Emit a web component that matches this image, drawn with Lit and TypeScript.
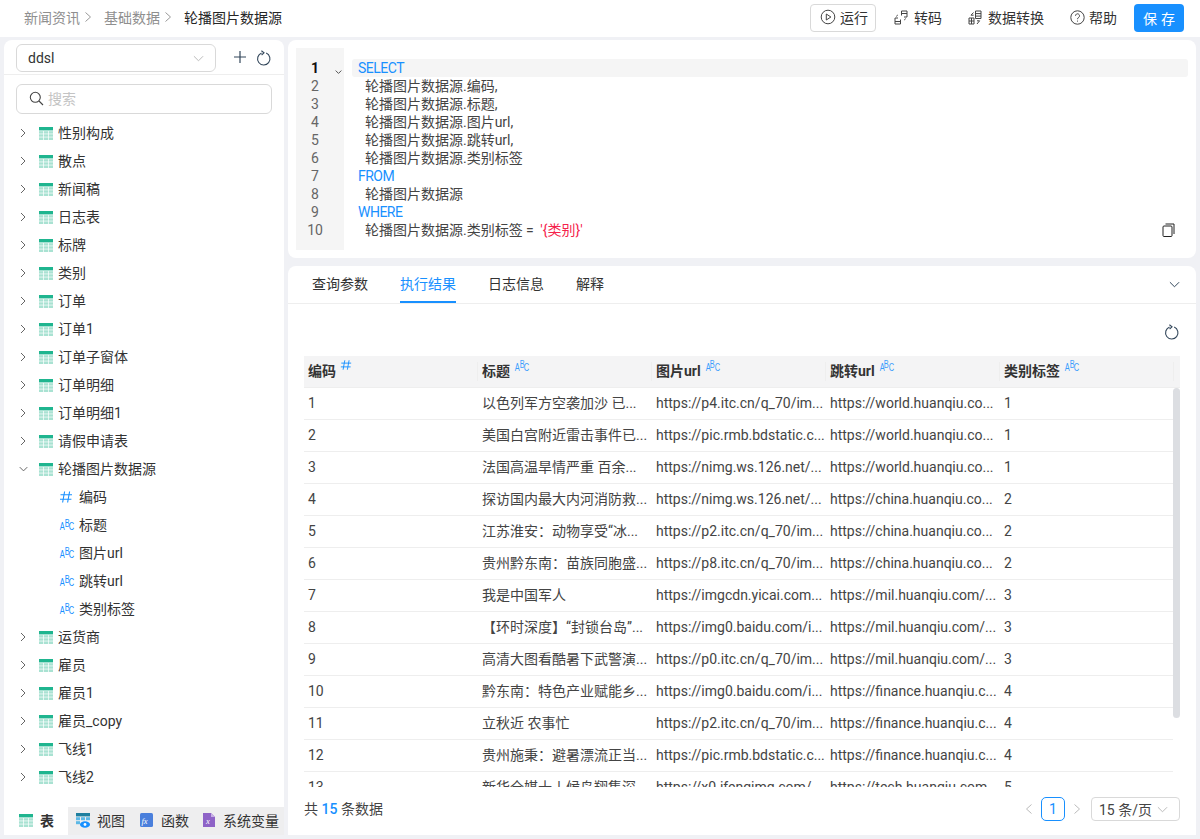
import { LitElement, html, css } from 'lit';
import { customElement } from 'lit/decorators.js';

const TABLES_TOP = ['性别构成', '散点', '新闻稿', '日志表', '标牌', '类别', '订单', '订单1', '订单子窗体', '订单明细', '订单明细1', '请假申请表'];
const TABLES_BOTTOM = ['运货商', '雇员', '雇员1', '雇员_copy', '飞线1', '飞线2'];
const FIELDS = [
  { name: '编码', num: true },
  { name: '标题' },
  { name: '图片url' },
  { name: '跳转url' },
  { name: '类别标签' },
];
const ROWS = [
  ['1', '以色列军方空袭加沙 已...', 'https://p4.itc.cn/q_70/im...', 'https://world.huanqiu.co...', '1'],
  ['2', '美国白宫附近雷击事件已...', 'https://pic.rmb.bdstatic.c...', 'https://world.huanqiu.co...', '1'],
  ['3', '法国高温旱情严重 百余...', 'https://nimg.ws.126.net/...', 'https://world.huanqiu.co...', '1'],
  ['4', '探访国内最大内河消防救...', 'https://nimg.ws.126.net/...', 'https://china.huanqiu.co...', '2'],
  ['5', '江苏淮安：动物享受“冰...', 'https://p2.itc.cn/q_70/im...', 'https://china.huanqiu.co...', '2'],
  ['6', '贵州黔东南：苗族同胞盛...', 'https://p8.itc.cn/q_70/im...', 'https://china.huanqiu.co...', '2'],
  ['7', '我是中国军人', 'https://imgcdn.yicai.com...', 'https://mil.huanqiu.com/...', '3'],
  ['8', '【环时深度】“封锁台岛”...', 'https://img0.baidu.com/i...', 'https://mil.huanqiu.com/...', '3'],
  ['9', '高清大图看酷暑下武警演...', 'https://p0.itc.cn/q_70/im...', 'https://mil.huanqiu.com/...', '3'],
  ['10', '黔东南：特色产业赋能乡...', 'https://img0.baidu.com/i...', 'https://finance.huanqiu.c...', '4'],
  ['11', '立秋近 农事忙', 'https://p2.itc.cn/q_70/im...', 'https://finance.huanqiu.c...', '4'],
  ['12', '贵州施秉：避暑漂流正当...', 'https://pic.rmb.bdstatic.c...', 'https://finance.huanqiu.c...', '4'],
  ['13', '新华全媒十丨候鸟翔集深...', 'https://x0.ifengimg.com/...', 'https://tech.huanqiu.com...', '5'],
];
const SQL = [
  [['kw', 'SELECT']],
  [['', '  轮播图片数据源.编码,']],
  [['', '  轮播图片数据源.标题,']],
  [['', '  轮播图片数据源.图片url,']],
  [['', '  轮播图片数据源.跳转url,']],
  [['', '  轮播图片数据源.类别标签']],
  [['kw', 'FROM']],
  [['', '  轮播图片数据源']],
  [['kw', 'WHERE']],
  [['', '  轮播图片数据源.类别标签 = '], ['str', "'{类别}'"]],
];

const chevronRight = html`<svg width="8" height="10" viewBox="0 0 8 10" fill="none" stroke="currentColor"><path d="M2 1l4 4-4 4"/></svg>`;
const chevronLarge = html`<svg width="8" height="12" viewBox="0 0 8 12" fill="none" stroke="currentColor"><path d="M1.5 1.5L6.5 6l-5 4.5"/></svg>`;
const chevronLeft = html`<svg width="8" height="12" viewBox="0 0 8 12" fill="none" stroke="currentColor"><path d="M6.5 1.5L1.5 6l5 4.5"/></svg>`;
const chevronDown = (w = 12, h = 7) => html`<svg width=${w} height=${h} viewBox="0 0 12 7" fill="none" stroke="currentColor"><path vector-effect="non-scaling-stroke" d="M1 1l5 5 5-5"/></svg>`;
const refresh = html`<svg width="16" height="16" viewBox="0 0 16 16" fill="none" stroke="#33475b" stroke-width="1.1"><path d="M10.2 3.1A6.2 6.2 0 1 1 5.6 3"/><path d="M5.4 0.8L8 2.8 5.6 5"/></svg>`;
const tableIcon = html`<svg width="14" height="13" viewBox="0 0 14 13"><rect width="14" height="3.4" fill="#1fb58f"/><g fill="#a9e2d2"><rect y="4.2" width="4.2" height="2.4"/><rect x="4.9" y="4.2" width="4.2" height="2.4"/><rect x="9.8" y="4.2" width="4.2" height="2.4"/><rect y="7.3" width="4.2" height="2.4"/><rect x="4.9" y="7.3" width="4.2" height="2.4"/><rect x="9.8" y="7.3" width="4.2" height="2.4"/><rect y="10.4" width="4.2" height="2.6"/><rect x="4.9" y="10.4" width="4.2" height="2.6"/><rect x="9.8" y="10.4" width="4.2" height="2.6"/></g></svg>`;
const hashIcon = (s = 14) => html`<svg width=${s} height=${s} viewBox="0 0 14 14" fill="none" stroke="#1890ff" stroke-width="1.1"><path d="M5.6 1.5L3.6 12.5M10.6 1.5L8.6 12.5M1.5 4.8H13M1 9.2H12.4"/></svg>`;
const abcIcon = html`<span class="abc"><i>A</i><i class="up">B</i><i>C</i></span>`;

@customElement('app-root')
export class AppRoot extends LitElement {
  static styles = css`
    :host {
      display: block;
      height: 839px;
      overflow: hidden;
      background: #f0f1f5;
      font-family: Roboto, "Noto Sans CJK SC", sans-serif;
      font-size: 14px;
      color: #333;
    }
    svg { display: block; flex: none; }
    .abc {
      display: inline-flex;
      flex: none;
      width: 14px;
      height: 12px;
      color: #1890ff;
      font-family: "Liberation Sans", sans-serif;
      font-size: 11px;
      line-height: 12px;
    }
    .abc i {
      display: block;
      width: 4.67px;
      font-style: normal;
      text-align: center;
      transform: translateY(1px) scaleX(0.68);
    }
    .abc i.up { transform: translateY(-2px) scaleX(0.68); }
    .topbar {
      height: 37px;
      box-sizing: border-box;
      background: #fff;
      display: flex;
      align-items: center;
      justify-content: space-between;
      padding: 0 16px 1px 24px;
    }
    .crumbs { display: flex; align-items: center; color: #8f8f8f; padding-bottom: 2px; }
    .crumbs svg { margin: 0 12px 0 4px; color: #999; }
    .crumbs b { font-weight: 400; color: #262626; }
    .actions { display: flex; align-items: center; }
    .act { display: flex; align-items: center; gap: 6px; margin-right: 26px; color: #333; white-space: nowrap; padding-bottom: 2px; }
    .act.run {
      height: 28px;
      box-sizing: border-box;
      padding: 0 7px 2px 9px;
      border: 1px solid #d9d9d9;
      border-radius: 4px;
      margin-right: 18px;
      gap: 4px;
    }
    .act.help { gap: 4px; margin-right: 17px; }
    .save {
      width: 50px;
      height: 28px;
      border-radius: 4px;
      background: #1890ff;
      color: #fff;
      display: flex;
      align-items: center;
      justify-content: center;
      letter-spacing: 4px;
      padding: 0 0 1px 4px;
      box-sizing: border-box;
    }
    .main { display: flex; gap: 4px; padding: 3px 4px 4px; height: 802px; box-sizing: border-box; }
    .side {
      width: 280px;
      flex: none;
      background: #fff;
      border-radius: 8px 8px 0 0;
      display: flex;
      flex-direction: column;
      overflow: hidden;
    }
    .side-top {
      height: 35px;
      box-sizing: border-box;
      display: flex;
      align-items: flex-start;
      padding: 4px 12px 0;
      border-bottom: 1px solid #eee;
      flex: none;
    }
    .select {
      width: 200px;
      height: 28px;
      box-sizing: border-box;
      border: 1px solid #d9d9d9;
      border-radius: 6px;
      display: flex;
      align-items: center;
      justify-content: space-between;
      padding: 0 11px;
      color: #333;
    }
    .select svg { color: #bbb; }
    .side-top .plus { margin: 6px 0 0 17px; }
    .side-top .re { margin: 6px 0 0 9px; }
    .search {
      margin: 9px 12px 5px;
      height: 30px;
      box-sizing: border-box;
      border: 1px solid #d9d9d9;
      border-radius: 6px;
      display: flex;
      align-items: center;
      gap: 4px;
      padding: 0 12px 2px;
      color: #c4c4c4;
      flex: none;
    }
    .tree { flex: 1; min-height: 0; overflow: hidden; }
    .node { height: 28px; display: flex; align-items: center; color: #333; }
    .node .arrow { width: 8px; margin-left: 15px; margin-right: 12px; color: #666; display: flex; justify-content: center; }
    .node .label { margin: -2px 0 0 5px; }
    .field { padding-left: 55px; }
    .field .glyph { width: 14px; margin-right: 6px; display: flex; justify-content: center; align-items: center; }
    .field .name { margin-top: -2px; }
    .tabs { height: 28px; flex: none; display: flex; background: #eeeeef; }
    .tab { display: flex; align-items: center; gap: 7px; padding: 0 0 2px 8px; margin-right: 15px; color: #333; white-space: nowrap; flex: none; }
    .tab.wide { gap: 8px; padding-left: 0; margin-right: 14px; }
    .tab.on { background: #fff; width: 64px; box-sizing: border-box; padding-left: 15px; margin-right: 0; font-weight: 700; }
    .content { flex: 1; min-width: 0; display: flex; flex-direction: column; gap: 8px; }
    .card { background: #fff; border-radius: 8px; }
    .editor { height: 218px; flex: none; box-sizing: border-box; padding: 8px; display: flex; position: relative; }
    .gutter {
      width: 48px;
      height: 202px;
      background: #f5f5f5;
      box-sizing: border-box;
      padding-top: 11px;
      flex: none;
      position: relative;
    }
    .ln { height: 18px; line-height: 18px; width: 38px; text-align: center; color: #666; }
    .ln.cur { color: #111; font-weight: 700; }
    .fold { position: absolute; left: 39px; top: 22px; color: #555; }
    .code { flex: 1; margin-left: 8px; padding-top: 11px; }
    .line { height: 18px; line-height: 18px; white-space: pre; padding-left: 6px; color: #444; border-radius: 3px; }
    .line.cur { background: #f5f5f5; }
    .kw { color: #1890ff; letter-spacing: -0.5px; }
    .str { color: #f5224b; margin-left: 3px; }
    .copy { position: absolute; right: 21px; bottom: 21px; }
    .result { flex: 1; min-height: 0; display: flex; flex-direction: column; border-radius: 8px 8px 0 0; }
    .rtabs {
      height: 38px;
      box-sizing: border-box;
      flex: none;
      display: flex;
      gap: 32px;
      padding: 0 16px 0 24px;
      border-bottom: 1px solid #eee;
      position: relative;
    }
    .rtab { height: 37px; box-sizing: border-box; padding-top: 8px; line-height: 20px; color: #333; }
    .rtab.on { color: #1890ff; border-bottom: 2px solid #1890ff; }
    .collapse { margin-left: auto; align-self: center; color: #33475b; }
    .tools { height: 52px; flex: none; display: flex; justify-content: flex-end; align-items: flex-start; padding: 20px 16px 0 0; box-sizing: border-box; }
    .grid { margin: 0 16px; height: 431px; overflow: hidden; position: relative; flex: none; }
    .thead { display: flex; height: 32px; background: #f4f4f5; border-bottom: 1px solid #eee; box-sizing: border-box; }
    .th {
      width: 174px;
      box-sizing: border-box;
      padding: 0 0 4px 4px;
      font-weight: 700;
      color: #333;
      display: flex;
      align-items: center;
      gap: 4px;
      position: relative;
    }
    .th svg { align-self: flex-start; margin-top: 3px; }
    .th .abc { align-self: flex-start; margin-top: 4px; font-weight: 400; opacity: 0.85; }
    .th::after {
      content: '';
      position: absolute;
      right: 0;
      top: 6px;
      bottom: 6px;
      width: 1px;
      background: #eee;
    }
    .tr { display: flex; height: 32px; box-sizing: border-box; border-bottom: 1px solid #eee; width: 869px; }
    .td {
      width: 174px;
      flex: none;
      box-sizing: border-box;
      padding: 0 0 0 4px;
      line-height: 30px;
      white-space: nowrap;
      color: #444;
    }
    .tr .td:last-child { width: 173px; }
    .thumb { position: absolute; right: 0; top: 32px; width: 7px; height: 330px; background: #dcdee2; border-radius: 4px; }
    .pager {
      flex: 1;
      display: flex;
      align-items: center;
      padding: 0 16px 4px;
      color: #444;
    }
    .pager .total { padding-bottom: 3px; }
    .pager .total b { color: #1890ff; font-weight: 500; }
    .pager .nav { margin-left: auto; display: flex; align-items: center; color: #bbb; }
    .page {
      width: 24px;
      height: 24px;
      box-sizing: border-box;
      border: 1px solid #1890ff;
      border-radius: 5px;
      color: #1890ff;
      display: flex;
      align-items: center;
      justify-content: center;
      margin: 0 8px;
    }
    .size {
      width: 89px;
      height: 24px;
      box-sizing: border-box;
      border: 1px solid #d9d9d9;
      border-radius: 4px;
      display: flex;
      align-items: center;
      justify-content: space-between;
      padding: 0 11px 0 7px;
      margin-left: 10px;
      color: #444;
    }
    .size svg { color: #bbb; }
  `;

  renderTopbar() {
    return html`
      <div class="topbar">
        <div class="crumbs">
          <span>新闻资讯</span>${chevronLarge}
          <span>基础数据</span>${chevronLarge}
          <b>轮播图片数据源</b>
        </div>
        <div class="actions">
          <div class="act run">
            <svg width="16" height="16" viewBox="0 0 16 16" fill="none" stroke="#444"><circle cx="8" cy="8" r="6.8"/><path d="M6.3 5v6l4.6-3z"/></svg>
            运行
          </div>
          <div class="act">
            <svg width="14" height="15" viewBox="0 0 14 15" fill="none" stroke="#444"><path d="M7.5 5.5V1h5.5v6h-3M6.5 9.5V14H1V8h3"/><path d="M1 11.5h5.5M7.5 3.5H13"/><path d="M3.8 5l-1.6 1.4M10.2 10l1.6-1.4"/></svg>
            转码
          </div>
          <div class="act">
            <svg width="14" height="15" viewBox="0 0 14 15" fill="none" stroke="#444"><path d="M7.5 1H13v7.5H7.5zM7.5 3.6H13M7.5 6.1H13"/><path d="M1 8h5v6H1zM1 11h5M3.5 8v6"/><path d="M5.5 2.5L3 5.2h2.6M9 14l2.6-3.2H9"/></svg>
            数据转换
          </div>
          <div class="act help">
            <svg width="15" height="15" viewBox="0 0 15 15" fill="none" stroke="#444"><circle cx="7.5" cy="7.5" r="6.7"/><path d="M5.5 5.8a2 2 0 1 1 3.2 1.6c-.8.5-1.2.9-1.2 1.8"/><path d="M7.5 10.6v1"/></svg>
            帮助
          </div>
          <div class="save">保存</div>
        </div>
      </div>
    `;
  }

  renderNode(name: string, open = false) {
    return html`
      <div class="node">
        <span class="arrow">${open ? chevronDown(9, 6) : chevronRight}</span>
        ${tableIcon}
        <span class="label">${name}</span>
      </div>
    `;
  }

  renderSide() {
    return html`
      <div class="side">
        <div class="side-top">
          <div class="select"><span>ddsl</span>${chevronDown(11, 7)}</div>
          <svg class="plus" width="14" height="14" viewBox="0 0 14 14" stroke="#33475b" stroke-width="1.2"><path d="M7 1v12M1 7h12"/></svg>
          <span class="re">${refresh}</span>
        </div>
        <div class="search">
          <svg width="15" height="15" viewBox="0 0 15 15" fill="none" stroke="#444" stroke-width="1.1"><circle cx="6.3" cy="6.3" r="5"/><path d="M10 10l4 4"/></svg>
          搜索
        </div>
        <div class="tree">
          ${TABLES_TOP.map((t) => this.renderNode(t))}
          ${this.renderNode('轮播图片数据源', true)}
          ${FIELDS.map((f) => html`
            <div class="node field">
              <span class="glyph">${f.num ? hashIcon(14) : abcIcon}</span>
              <span class="name">${f.name}</span>
            </div>
          `)}
          ${TABLES_BOTTOM.map((t) => this.renderNode(t))}
        </div>
        <div class="tabs">
          <div class="tab on">${tableIcon}表</div>
          <div class="tab">
            <svg width="14" height="15" viewBox="0 0 14 15"><rect width="14" height="3.4" fill="#1e7f9f"/><g fill="#5cb8e6"><rect y="4.2" width="4" height="3"/><rect x="5" y="4.2" width="4" height="3"/><rect x="10" y="4.2" width="4" height="3"/><rect y="8.2" width="4" height="3"/></g><ellipse cx="9" cy="11.5" rx="5" ry="3.3" fill="#1890ff"/><circle cx="9" cy="11.5" r="1.4" fill="#fff"/></svg>
            视图
          </div>
          <div class="tab wide">
            <svg width="13" height="14" viewBox="0 0 13 14"><rect width="13" height="14" rx="1.5" fill="#4a7fdc"/><text x="1.5" y="10.5" font-size="8.5" font-style="italic" font-family="'Liberation Serif',serif" fill="#fff">fx</text></svg>
            函数
          </div>
          <div class="tab wide">
            <svg width="12" height="14" viewBox="0 0 12 14"><path d="M0 0h8l4 4v10H0z" fill="#8e63c7"/><path d="M8 0l4 4H8z" fill="#c7b0e5"/><text x="3" y="10.5" font-size="8.5" font-style="italic" font-family="'Liberation Serif',serif" fill="#fff">x</text></svg>
            系统变量
          </div>
        </div>
      </div>
    `;
  }

  renderEditor() {
    return html`
      <div class="card editor">
        <div class="gutter">
          ${SQL.map((_, i) => html`<div class="ln ${i === 0 ? 'cur' : ''}">${i + 1}</div>`)}
          <span class="fold">${chevronDown(7, 4)}</span>
        </div>
        <div class="code">
          ${SQL.map((parts, i) => html`
            <div class="line ${i === 0 ? 'cur' : ''}">${parts.map(([c, t]) => html`<span class=${c}>${t}</span>`)}</div>
          `)}
        </div>
        <svg class="copy" width="13" height="14" viewBox="0 0 13 14" fill="none" stroke="#222"><rect x="1" y="3" width="9" height="10.5" rx="1"/><path d="M3.5 1h8.5v10"/></svg>
      </div>
    `;
  }

  renderResult() {
    return html`
      <div class="card result">
        <div class="rtabs">
          <div class="rtab">查询参数</div>
          <div class="rtab on">执行结果</div>
          <div class="rtab">日志信息</div>
          <div class="rtab">解释</div>
          <span class="collapse">${chevronDown(11, 7)}</span>
        </div>
        <div class="tools">${refresh}</div>
        <div class="grid">
          <div class="thead">
            ${FIELDS.map((f) => html`<div class="th">${f.name}${f.num ? hashIcon(12) : abcIcon}</div>`)}
          </div>
          ${ROWS.map((r) => html`<div class="tr">${r.map((c) => html`<div class="td">${c}</div>`)}</div>`)}
          <div class="thumb"></div>
        </div>
        <div class="pager">
          <span class="total">共 <b>15</b> 条数据</span>
          <div class="nav">
            ${chevronLeft}
            <span class="page">1</span>
            ${chevronLarge}
            <div class="size"><span>15 条/页</span>${chevronDown(11, 7)}</div>
          </div>
        </div>
      </div>
    `;
  }

  render() {
    return html`
      ${this.renderTopbar()}
      <div class="main">
        ${this.renderSide()}
        <div class="content">
          ${this.renderEditor()}
          ${this.renderResult()}
        </div>
      </div>
    `;
  }
}
